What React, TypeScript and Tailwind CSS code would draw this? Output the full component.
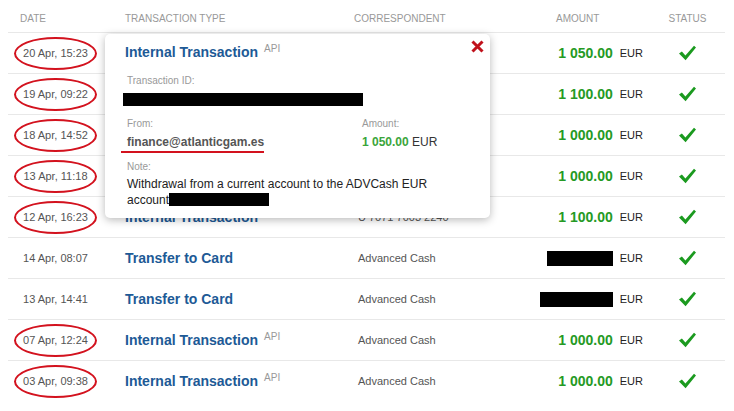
import React from "react";

type Row = {
  date: string;
  circled: boolean;
  type: string;
  api: boolean;
  corr: string;
  amount: string | null;
  redactW?: number;
};

// rows 1-4: type and correspondent sit under the open popup, so they are left blank
const ROWS: Row[] = [
  { date: "20 Apr, 15:23", circled: true, type: "", api: false, corr: "", amount: "1 050.00" },
  { date: "19 Apr, 09:22", circled: true, type: "", api: false, corr: "", amount: "1 100.00" },
  { date: "18 Apr, 14:52", circled: true, type: "", api: false, corr: "", amount: "1 000.00" },
  { date: "13 Apr, 11:18", circled: true, type: "", api: false, corr: "", amount: "1 000.00" },
  { date: "12 Apr, 16:23", circled: true, type: "Internal Transaction", api: false, corr: "U 7071 7003 2240", amount: "1 100.00" },
  { date: "14 Apr, 08:07", circled: false, type: "Transfer to Card", api: false, corr: "Advanced Cash", amount: null, redactW: 66 },
  { date: "13 Apr, 14:41", circled: false, type: "Transfer to Card", api: false, corr: "Advanced Cash", amount: null, redactW: 73 },
  { date: "07 Apr, 12:24", circled: true, type: "Internal Transaction", api: true, corr: "Advanced Cash", amount: "1 000.00" },
  { date: "03 Apr, 09:38", circled: true, type: "Internal Transaction", api: true, corr: "Advanced Cash", amount: "1 000.00" },
];

function Check() {
  return (
    <svg width="17" height="16" viewBox="0 0 17 16" aria-hidden="true">
      <path d="M0 8.6 L2.9 6.4 L6.4 10.4 L15 0.8 L17 2.4 L6.6 15.2 Z" fill="#1b9a1f" />
    </svg>
  );
}

function Close() {
  return (
    <svg width="13" height="13" viewBox="0 0 13 13" aria-hidden="true">
      <path d="M1.5 1.5 L11.5 11.5 M11.5 1.5 L1.5 11.5" stroke="#c0121c" strokeWidth="3" />
    </svg>
  );
}

export default function App() {
  return (
    <div className="relative h-[411px] w-[734px] overflow-hidden bg-white font-['Liberation_Sans',Arial,sans-serif]">
      <div className="ml-[8px] w-[717px]">
        {/* header */}
        <div className="grid h-[32px] grid-cols-[95px_247px_150px_150px_75px] pt-[13px] text-[10px] leading-[12px] uppercase text-[#999]">
          <div className="pl-[12px]">Date</div>
          <div className="pl-[22px]">Transaction type</div>
          <div className="pl-[4px]">Correspondent</div>
          <div className="pl-[56px]">Amount</div>
          <div className="text-center">Status</div>
        </div>

        {ROWS.map((r, i) => (
          <div
            key={i}
            className="grid h-[41px] grid-cols-[95px_247px_150px_150px_75px] items-center border-t border-[#e8e8e8]"
          >
            <div className="flex justify-center">
              {r.circled ? (
                <span className="inline-block rounded-[50%] border-2 border-[#d3121e] px-[7px] py-[8px] text-[11px] leading-[13px] text-[#555]">
                  {r.date}
                </span>
              ) : (
                <span className="text-[11px] leading-[13px] text-[#555]">{r.date}</span>
              )}
            </div>
            <div className="pl-[22px] text-[14px] font-bold text-[#1d5a96]">
              {r.type}
              {r.api && <sup className="ml-[6px] text-[10px] font-normal text-[#999]">API</sup>}
            </div>
            <div className="pl-[8px] text-[11px] text-[#555]">{r.corr}</div>
            <div className="flex items-center justify-end gap-[7px] pr-[7px]">
              {r.amount ? (
                <span className="text-[14px] font-bold text-[#259a25]">{r.amount}</span>
              ) : (
                <span className="inline-block h-[15px] bg-black" style={{ width: r.redactW }} />
              )}
              <span className="text-[11px] text-[#222]">EUR</span>
            </div>
            <div className="flex justify-center">
              <Check />
            </div>
          </div>
        ))}
      </div>

      {/* details popup */}
      <div className="absolute left-[105px] top-[34px] h-[184px] w-[385px] rounded-[5px] bg-white pl-[20px] pt-[10px] shadow-[0_2px_9px_rgba(0,0,0,0.28)]">
        <div className="absolute right-[6px] top-[6px]">
          <Close />
        </div>
        <div className="text-[14px] leading-[17px] font-bold text-[#1d5a96]">
          Internal Transaction
          <sup className="ml-[6px] text-[10px] font-normal text-[#999]">API</sup>
        </div>

        <div className="ml-[2px] mt-[14px] text-[10px] leading-[12px] text-[#999]">Transaction ID:</div>
        <div className="-ml-[2px] mt-[6px] h-[13px] w-[240px] bg-black" />

        <div className="mt-[12px] flex">
          <div className="w-[237px]">
            <div className="ml-[2px] text-[10px] leading-[12px] text-[#999]">From:</div>
            <div className="ml-[2px] mt-[5px] text-[12px] leading-[14px] font-bold text-[#555]">
              finance@atlanticgam.es
            </div>
            <div className="-ml-[4px] mt-[2px] h-[2px] w-[143px] bg-[#d3121e]" />
          </div>
          <div>
            <div className="text-[10px] leading-[12px] text-[#999]">Amount:</div>
            <div className="mt-[5px] text-[12px] leading-[14px]">
              <span className="font-bold text-[#3aa53a]">1 050.00</span>{" "}
              <span className="text-[#333]">EUR</span>
            </div>
          </div>
        </div>

        <div className="ml-[2px] mt-[8px] text-[10px] leading-[12px] text-[#999]">Note:</div>
        <div className="ml-[2px] mt-[3px] pr-[40px] text-[12px] leading-[16px] text-[#222]">
          Withdrawal from a current account to the ADVCash EUR account
          <span className="inline-block h-[13px] w-[100px] bg-black align-[-2px]" />
        </div>
      </div>
    </div>
  );
}
